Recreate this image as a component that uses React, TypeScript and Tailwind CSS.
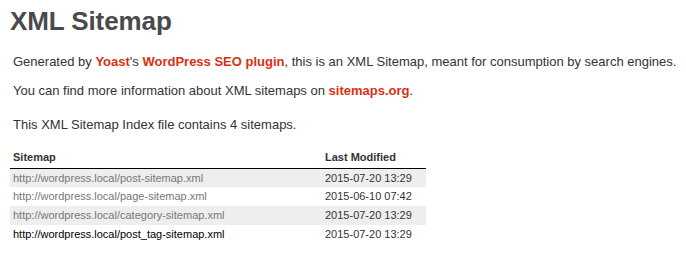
import React from 'react';

const sitemaps = [
  { url: 'http://wordpress.local/post-sitemap.xml', modified: '2015-07-20 13:29', visited: true },
  { url: 'http://wordpress.local/page-sitemap.xml', modified: '2015-06-10 07:42', visited: true },
  { url: 'http://wordpress.local/category-sitemap.xml', modified: '2015-07-20 13:29', visited: true },
  { url: 'http://wordpress.local/post_tag-sitemap.xml', modified: '2015-07-20 13:29', visited: false },
];

export default function App() {
  return (
    <div className="w-[686px] h-[265px] bg-white overflow-hidden font-['Liberation_Sans',Arial,sans-serif] text-[#333] px-[10px]">
      <h1 className="text-[26px] leading-[30px] font-bold text-[#4a4a4a] pt-[6px] tracking-[-0.1px]">XML Sitemap</h1>

      <div className="text-[13px] leading-[16px] pl-[3px] whitespace-nowrap">
        <p className="mt-[18px]">
          Generated by <a className="font-bold text-[#da3114]">Yoast</a>'s{' '}
          <a className="font-bold text-[#da3114]">WordPress SEO plugin</a>, this is an XML Sitemap, meant for consumption by search engines.
        </p>
        <p className="mt-[13px]">
          You can find more information about XML sitemaps on <a className="font-bold text-[#da3114]">sitemaps.org</a>.
        </p>
        <p className="mt-[18px]">This XML Sitemap Index file contains 4 sitemaps.</p>
      </div>

      <table className="mt-[16px] w-[416px] border-collapse text-[11px]">
        <thead>
          <tr className="border-b border-black">
            <th className="text-left font-bold pl-[3px] pb-[2px] h-[19px] w-[312px]">Sitemap</th>
            <th className="text-left font-bold pl-[3px] pb-[2px]">Last Modified</th>
          </tr>
        </thead>
        <tbody>
          {sitemaps.map((s, i) => (
            <tr key={s.url} className={i % 2 === 0 ? 'bg-[#eee]' : ''}>
              <td className="pl-[3px] h-[19px]">
                <a className={s.visited ? 'text-[#777]' : 'text-black'}>{s.url}</a>
              </td>
              <td className="pl-[3px]">{s.modified}</td>
            </tr>
          ))}
        </tbody>
      </table>
    </div>
  );
}
